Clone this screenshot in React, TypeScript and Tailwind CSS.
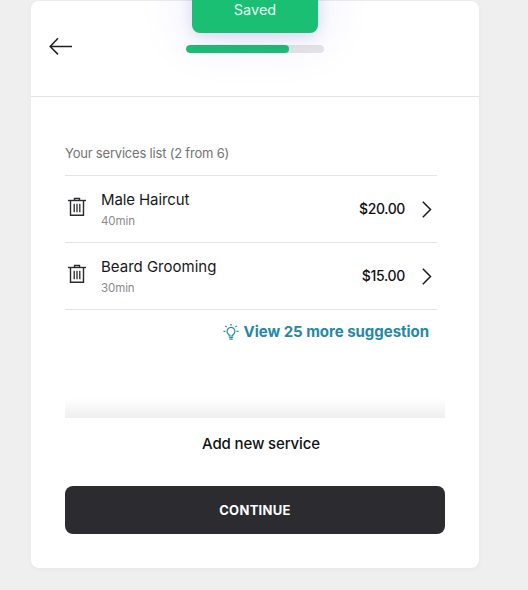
type Service = { name: string; duration: string; price: string; nameClass: string; priceClass: string };

const services: Service[] = [
  { name: 'Male Haircut', duration: '40min', price: '$20.00', nameClass: 'tracking-[-0.1px]', priceClass: 'tracking-[-0.4px]' },
  { name: 'Beard Grooming', duration: '30min', price: '$15.00', nameClass: 'tracking-[0px]', priceClass: 'tracking-[-0.3px]' },
];

function BackIcon() {
  return (
    <svg width="24" height="18" viewBox="0 0 24 18" fill="none" stroke="#1f1f22" strokeWidth="1.5">
      <path d="M23 9.5H1.5M9 1.3L1.2 9.5L9 17.4" />
    </svg>
  );
}

function TrashIcon() {
  return (
    <svg className="block" width="18" height="19" viewBox="0 0 18 19" fill="none" stroke="#2b2b30">
      <path d="M0 3.5H18" strokeWidth="1.4" />
      <path d="M6.5 3.5V1.5H11.5V3.5" strokeWidth="1.4" />
      <path d="M2.5 3.5V18.2H15.5V3.5" strokeWidth="1.4" />
      <path d="M6.2 6.8V15.3M9 6.8V15.3M11.8 6.8V15.3" strokeWidth="1.3" />
    </svg>
  );
}

function ChevronIcon() {
  return (
    <svg className="block" width="10" height="17" viewBox="0 0 10 17" fill="none" stroke="#1c1c1f" strokeWidth="1.5">
      <path d="M0.8 0.7L8.5 8.5L0.8 16.3" />
    </svg>
  );
}

function BulbIcon() {
  return (
    <svg className="block" width="16" height="16" viewBox="0 0 16 16" fill="none" stroke="#2588a6" strokeWidth="1.2">
      <path d="M6.2 12V10.8A3.9 3.9 0 1 1 9.8 10.8V12Z" />
      <path d="M6 13.5H10M6.4 15.2H9.6M8 0V1.8M0.5 7.4H2.4M13.6 7.4H15.5M2.3 1.8L3.6 3.1M13.7 1.8L12.4 3.1" />
    </svg>
  );
}

function ServiceRow({ service }: { service: Service }) {
  return (
    <li className="flex h-[67px] items-center border-b border-[#e4e4e4] pl-[3px] pr-[5px]">
      <div className="pb-[5px]">
        <TrashIcon />
      </div>
      <div className="ml-[15px] flex-1 pt-px">
        <div className={`text-[15px] leading-[22px] text-[#18181b] ${service.nameClass}`}>{service.name}</div>
        <div className="text-[11.5px] leading-5 tracking-[-0.1px] text-[#8a8a8c]">{service.duration}</div>
      </div>
      <div className={`mr-[17px] text-sm font-medium text-[#111114] ${service.priceClass}`}>{service.price}</div>
      <ChevronIcon />
    </li>
  );
}

export default function App() {
  return (
    <div className="h-[590px] w-[528px] overflow-hidden bg-[#efefef] pl-[31px] pt-px font-['Inter',sans-serif]">
      <main className="relative h-[567px] w-[448px] rounded-lg bg-white shadow-[0_1px_6px_rgba(0,0,0,0.04)]">
        <header className="flex h-24 items-start border-b border-[#e5e5e5]">
          <button className="ml-[18px] mt-9" aria-label="Back">
            <BackIcon />
          </button>
          <div className="ml-[113px] mt-[44px] h-2 w-[138px] overflow-hidden rounded-full bg-[#e5e5e8]">
            <div className="h-full w-[103px] rounded-full bg-[#1bbf73]" />
          </div>
        </header>

        <section className="flex h-[471px] flex-col px-[34px] pt-[46px]">
          <h2 className="h-8 text-[13px] leading-[21px] tracking-[-0.2px] text-[#737375]">Your services list (2 from 6)</h2>
          <ul className="mr-2 border-t border-[#e4e4e4]">
            {services.map((service) => (
              <ServiceRow key={service.name} service={service} />
            ))}
          </ul>
          <button className="mr-4 mt-[10px] flex h-6 items-center justify-end gap-[5px] text-[#2588a6]">
            <BulbIcon />
            <span className="text-[15px] font-bold tracking-[-0.03px]">View 25 more suggestion</span>
          </button>
          <div className="mt-[54px] h-5 bg-gradient-to-b from-white to-[#efefef]" />
          <button className="mt-[14px] h-6 pl-3 text-[15px] font-medium tracking-[-0.13px] text-[#111114]">Add new service</button>
          <button className="mt-[30px] h-12 rounded-lg bg-[#2b2b30] pt-0.5 text-[13px] font-bold tracking-[0.3px] text-white">CONTINUE</button>
        </section>

        <div className="absolute -top-6 left-[161px] flex h-14 w-[126px] items-center justify-center rounded-lg bg-[#1bbf73] pt-[10px] text-[14.5px] text-[#e8fff4] shadow-[0_0_54px_rgba(60,70,240,0.15),0_3px_14px_rgba(50,50,150,0.14)]">
          Saved
        </div>
      </main>
    </div>
  );
}
